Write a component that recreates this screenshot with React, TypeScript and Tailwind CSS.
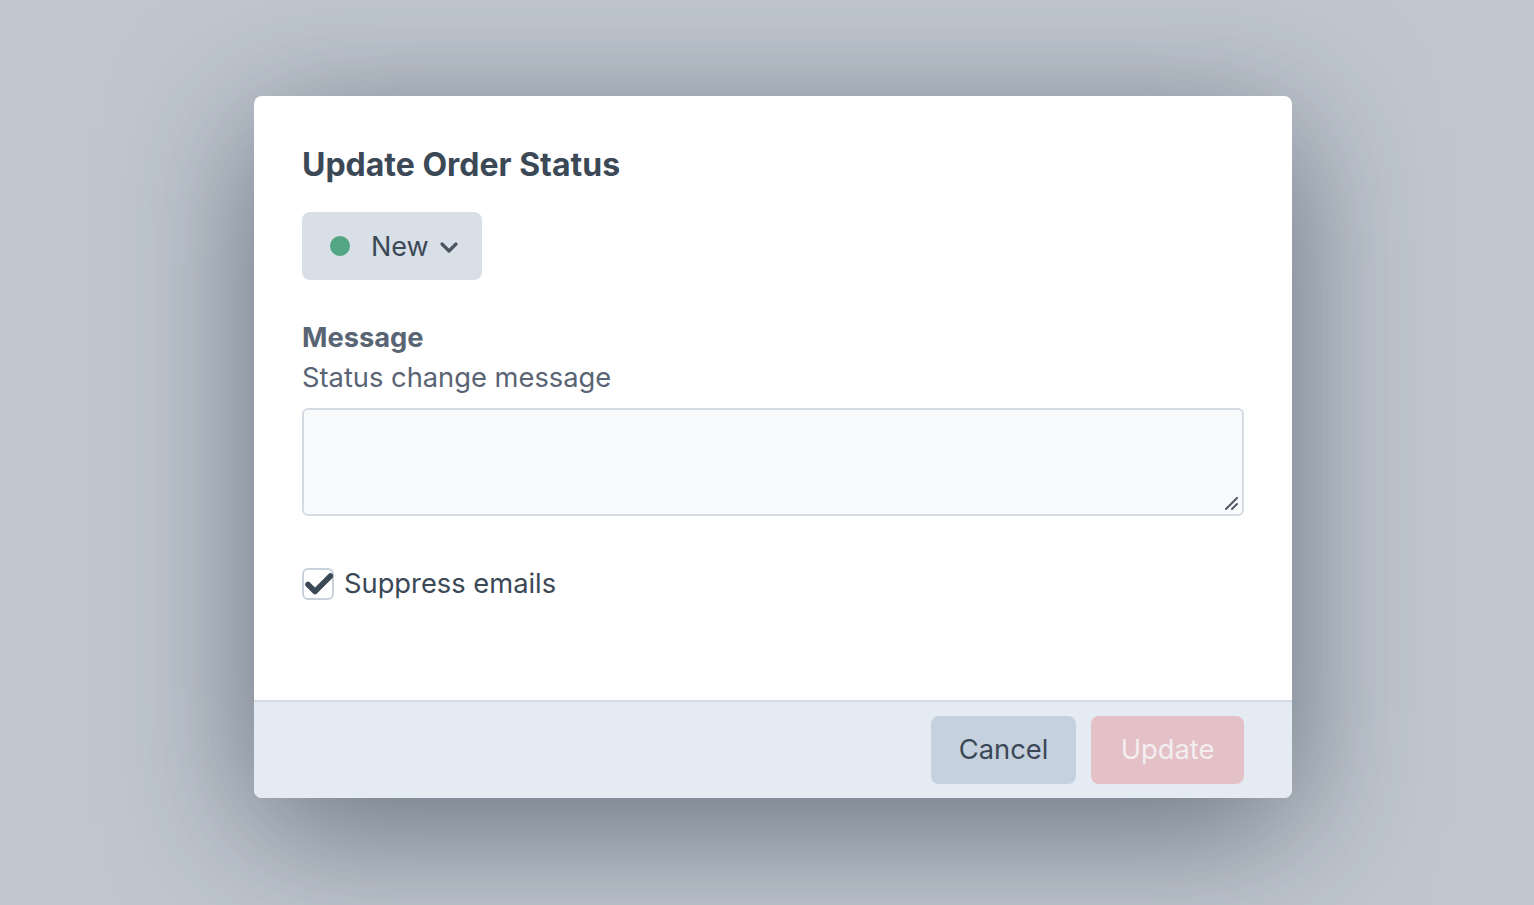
import React from "react";

const StatusDropdown: React.FC = () => (
    <button
        type="button"
        className="flex items-center h-[68px] w-[180px] pl-[28px] rounded-[8px] bg-[#d8dfe7] text-[#3b4856]"
    >
        <span className="w-[20px] h-[20px] rounded-full bg-[#52a683]" />
        <span className="ml-[21px] text-[27px] leading-none">New</span>
        <svg className="ml-[10px] mt-[2px]" width="20" height="14" viewBox="0 0 20 14" fill="none">
            <path d="M3 4l7 7 7-7" stroke="#4a5563" strokeWidth="3.2" strokeLinecap="round" strokeLinejoin="round" />
        </svg>
    </button>
);

const Checkbox: React.FC = () => (
    <span className="relative w-[32px] h-[32px] rounded-[6px] border-2 border-[#c9d1db] bg-white">
        <svg className="absolute left-[1px] top-[3px]" width="28" height="22" viewBox="0 0 28 22" fill="none">
            <path d="M3 11.5l7 7L25.5 3" stroke="#3b4856" strokeWidth="5.5" strokeLinecap="round" strokeLinejoin="round" />
        </svg>
    </span>
);

export default function App() {
    return (
        <div
            className="min-h-screen w-full flex justify-center items-start pt-[96px] pl-[12px] bg-[#c0c7d0]"
            style={{ fontFamily: "Inter, 'Noto Sans', sans-serif" }}
        >
            <div className="w-[1038px] rounded-[8px] bg-white overflow-hidden shadow-[0_30px_140px_rgba(30,41,59,0.55)]">
                {/* body */}
                <div className="px-[48px] pt-[49px] pb-[100px]">
                    <h2 className="text-[32px] leading-[40px] font-bold text-[#3b4856]">Update Order Status</h2>

                    <div className="mt-[27px]">
                        <StatusDropdown />
                    </div>

                    <div className="mt-[38px] text-[27.3px] leading-[40px] text-[#596474]">
                        <p className="font-bold">Message</p>
                        <p>Status change message</p>
                    </div>

                    <div className="relative mt-[10px] h-[108px] rounded-[6px] border-2 border-[#d5dbe2] bg-[#f8fafc]">
                        <textarea className="w-full h-full resize-none bg-transparent outline-none px-3 py-2" />
                        <svg className="absolute right-[3px] bottom-[3px]" width="16" height="16" viewBox="0 0 16 16" fill="none">
                            <path d="M3 14L14 3M9 14l5-5" stroke="#505a66" strokeWidth="2" strokeLinecap="round" />
                        </svg>
                    </div>

                    <label className="mt-[52px] flex items-center gap-[10px] text-[27.3px] leading-none text-[#3b4856]">
                        <Checkbox />
                        <span>Suppress emails</span>
                    </label>
                </div>

                {/* footer */}
                <div className="flex justify-end gap-[15px] px-[48px] py-[14px] border-t-2 border-[#d3dbe5] bg-[#e4ebf3]">
                    <button className="h-[68px] w-[145px] rounded-[8px] bg-[#c5d1de] text-[27.3px] text-[#3b4856]">Cancel</button>
                    <button className="h-[68px] w-[153px] rounded-[8px] bg-[#e3c1c6] text-[27.3px] text-[#f4eef0]">Update</button>
                </div>
            </div>
        </div>
    );
}
